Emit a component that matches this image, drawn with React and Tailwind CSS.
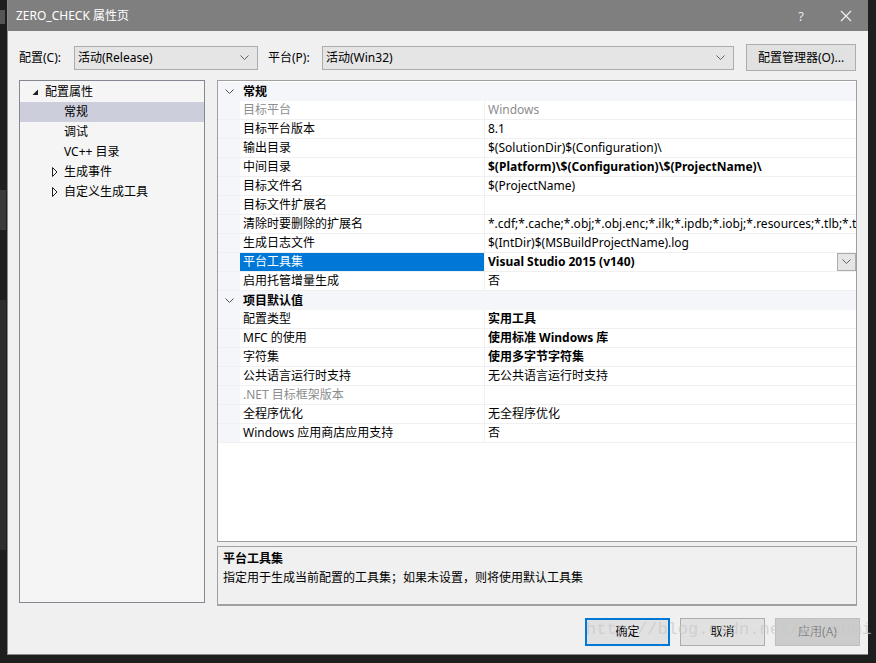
import React from "react";

const general = [
  { name: "目标平台", value: "Windows", disabled: true },
  { name: "目标平台版本", value: "8.1" },
  { name: "输出目录", value: "$(SolutionDir)$(Configuration)\\" },
  { name: "中间目录", value: "$(Platform)\\$(Configuration)\\$(ProjectName)\\", bold: true },
  { name: "目标文件名", value: "$(ProjectName)" },
  { name: "目标文件扩展名", value: "" },
  {
    name: "清除时要删除的扩展名",
    value:
      "*.cdf;*.cache;*.obj;*.obj.enc;*.ilk;*.ipdb;*.iobj;*.resources;*.tlb;*.tli;*.tlh;*.tmp;*.rsp;*.pgc;*.pgd;*.meta;*.tlog;*.manifest;*.res;*.pch;*.exp",
  },
  { name: "生成日志文件", value: "$(IntDir)$(MSBuildProjectName).log" },
  { name: "平台工具集", value: "Visual Studio 2015 (v140)", bold: true, selected: true },
  { name: "启用托管增量生成", value: "否" },
];

const defaults = [
  { name: "配置类型", value: "实用工具", bold: true },
  { name: "MFC 的使用", value: "使用标准 Windows 库", bold: true },
  { name: "字符集", value: "使用多字节字符集", bold: true },
  { name: "公共语言运行时支持", value: "无公共语言运行时支持" },
  { name: ".NET 目标框架版本", value: "", disabled: true },
  { name: "全程序优化", value: "无全程序优化" },
  { name: "Windows 应用商店应用支持", value: "否" },
];

const Chevron = ({ className = "" }) => (
  <svg width="9" height="6" viewBox="0 0 9 6" className={className}>
    <polyline points="0.5,0.5 4.5,4.5 8.5,0.5" fill="none" stroke="currentColor" strokeWidth="1" />
  </svg>
);

const Combo = ({ label, width }) => (
  <div className={`${width} shrink-0 h-[24px] bg-[#e5e5e5] border border-[#acacac] flex items-center justify-between pl-[3px] pr-[8px]`}>
    <span>{label}</span>
    <Chevron className="text-[#606060]" />
  </div>
);

const Category = ({ title }) => (
  <div className="h-[19px] flex items-center bg-[#f4f6fa]">
    <div className="w-[22px] flex justify-center">
      <Chevron className="text-[#505050]" />
    </div>
    <span className="font-bold pl-[3px]">{title}</span>
  </div>
);

const Row = ({ row }) => (
  <div className="h-[19px] flex border-b border-[#f0f0f0] bg-white min-w-0">
    <div className="w-[22px] shrink-0 bg-[#f4f6fa]"></div>
    <div
      className={`w-[245px] shrink-0 pl-[3px] flex items-center border-r border-[#f0f0f0] ${
        row.selected ? "bg-[#0078d7] text-white" : row.disabled ? "text-[#8d8d8d]" : "text-black"
      }`}
    >
      {row.name}
    </div>
    <div
      className={`flex-1 min-w-0 pl-[3px] flex items-center justify-between overflow-hidden whitespace-nowrap ${
        row.bold ? "font-bold" : ""
      } ${row.disabled ? "text-[#8d8d8d]" : "text-black"}`}
    >
      <span className="min-w-0 overflow-hidden">{row.value}</span>
      {row.selected && (
        <div className="w-[19px] h-[18px] shrink-0 bg-[#e5e5e5] border border-[#acacac] flex items-center justify-center text-[#606060]">
          <Chevron />
        </div>
      )}
    </div>
  </div>
);

const TreeItem = ({ label, indent, icon, selected }) => (
  <div className={`h-[20px] flex items-center whitespace-nowrap ${selected ? "bg-[#cccedb]" : ""}`}>
    <div className={`${indent} shrink-0 flex items-center justify-end pr-[6px]`}>{icon}</div>
    <span>{label}</span>
  </div>
);

const Expanded = () => (
  <svg width="7" height="7" viewBox="0 0 7 7">
    <polygon points="6,0.5 6,6 0.5,6" fill="#1e1e1e" />
  </svg>
);

const Collapsed = () => (
  <svg width="6" height="10" viewBox="0 0 6 10">
    <polygon points="0.5,0.5 5,5 0.5,9.5" fill="none" stroke="#1e1e1e" strokeWidth="1" />
  </svg>
);

export default function App() {
  return (
    <div className="relative w-[876px] h-[663px] bg-[#1e1e1e] overflow-hidden font-['Noto_Sans','Noto_Sans_CJK_SC',sans-serif] text-[12px] leading-[16px] text-black">
      <div className="absolute left-0 top-[10px] w-[5px] h-[14px] bg-[#555]"></div>
      <div className="absolute left-0 top-[190px] w-[6px] h-[40px] bg-[#3a3a3a]"></div>
      <div className="absolute left-0 top-[300px] w-[6px] h-[250px] bg-[#2d2d2d]"></div>
      <div className="ml-[7px] w-[861px] h-[655px] bg-[#f0f0f0] flex flex-col border-l border-b border-[#8a8a8a]">
        <div className="h-[31px] bg-[#7f7f7f] flex items-center justify-between text-white pl-[8px] pr-[16px] shrink-0">
          <span className="text-[12px]">ZERO_CHECK 属性页</span>
          <div className="flex items-center gap-[36px]">
            <span className="text-[13px] text-[#e8e8e8]">?</span>
            <svg width="12" height="12" viewBox="0 0 12 12">
              <path d="M1 1 L11 11 M11 1 L1 11" stroke="#f0f0f0" strokeWidth="1.2" />
            </svg>
          </div>
        </div>

        <div className="flex items-center mt-[13px] pl-[11px] h-[27px]">
          <span className="w-[55px] shrink-0">配置(C):</span>
          <Combo label="活动(Release)" width="w-[184px]" />
          <span className="ml-[10px] w-[54px] shrink-0">平台(P):</span>
          <Combo label="活动(Win32)" width="w-[412px]" />
          <div className="ml-[12px] w-[110px] shrink-0 h-[27px] bg-[#e1e1e1] border border-[#adadad] flex items-center justify-center">
            配置管理器(O)...
          </div>
        </div>

        <div className="flex mt-[9px] pl-[11px] pr-[11px] gap-[12px]">
          <div className="w-[186px] shrink-0 h-[523px] bg-[#f5f5f5] border border-[#828790] pt-[1px]">
            <TreeItem label="配置属性" indent="w-[25px]" icon={<Expanded />} />
            <TreeItem label="常规" indent="w-[44px]" selected />
            <TreeItem label="调试" indent="w-[44px]" />
            <TreeItem label="VC++ 目录" indent="w-[44px]" />
            <TreeItem label="生成事件" indent="w-[44px]" icon={<Collapsed />} />
            <TreeItem label="自定义生成工具" indent="w-[44px]" icon={<Collapsed />} />
          </div>
          <div className="flex-1 min-w-0 flex flex-col gap-[4px]">
            <div className="h-[462px] bg-white border border-[#a0a0a0] overflow-hidden pt-[1px]">
              <Category title="常规" />
              {general.map((r) => (
                <Row key={r.name} row={r} />
              ))}
              <Category title="项目默认值" />
              {defaults.map((r) => (
                <Row key={r.name} row={r} />
              ))}
            </div>
            <div className="h-[60px] bg-[#f0f0f0] border border-[#a0a0a0] border-b-2 px-[5px] pt-[2px]">
              <div className="font-bold leading-[19px]">平台工具集</div>
              <div className="leading-[19px]">指定用于生成当前配置的工具集；如果未设置，则将使用默认工具集</div>
            </div>
          </div>
        </div>

        <div className="flex justify-end gap-[10px] mt-[12px] pr-[8px]">
          <div className="w-[85px] h-[28px] bg-[#e1e1e1] border-2 border-[#0078d7] flex items-center justify-center">确定</div>
          <div className="w-[85px] h-[28px] bg-[#e1e1e1] border border-[#adadad] flex items-center justify-center">取消</div>
          <div className="w-[85px] h-[28px] bg-[#cccccc] border border-[#bfbfbf] flex items-center justify-center text-[#838383]">应用(A)</div>
        </div>
      </div>

      <div className="absolute left-[586px] top-[620px] font-['Liberation_Mono',monospace] text-[17px] leading-[20px] text-[#c8c8c8]/70 whitespace-nowrap pointer-events-none">
        http://blog.csdn.net/koloumi
      </div>
    </div>
  );
}
